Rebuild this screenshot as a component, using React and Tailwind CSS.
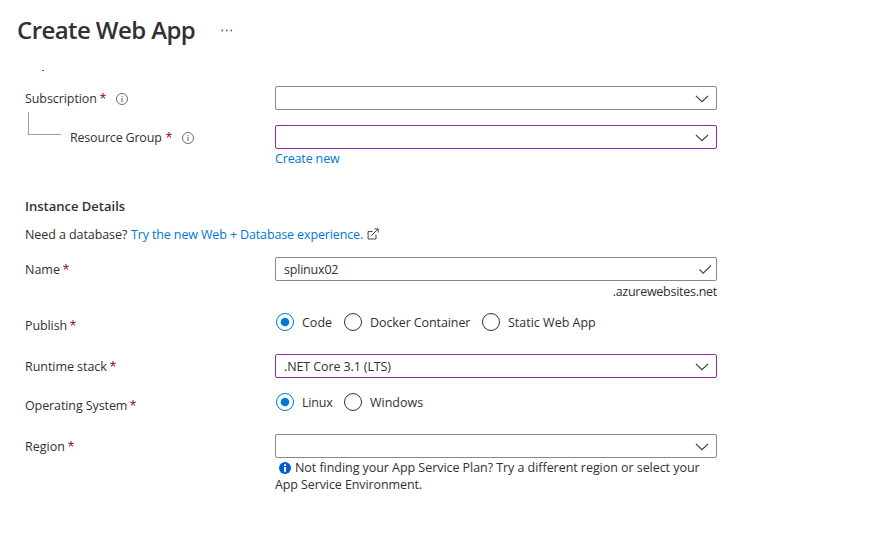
import React from "react";

function Chevron() {
  return (
    <svg className="mt-px" width="14" height="8" viewBox="0 0 14 8" fill="none" stroke="#3b3a39" strokeWidth="1.1">
      <path d="M0.9 0.8 L7 6.7 L13.1 0.8" />
    </svg>
  );
}

function Info() {
  return (
    <svg width="12" height="12" viewBox="0 0 12 12" fill="none" stroke="#605e5c">
      <circle cx="6" cy="6" r="5.5" strokeWidth="0.9" />
      <path d="M6 5V9M6 3V4.2" strokeWidth="1" />
    </svg>
  );
}

function Star() {
  return (
    <svg className="mb-[5px] ml-[3px] shrink-0" width="6" height="6" viewBox="0 0 6 6" stroke="#a4262c" strokeWidth="1.1">
      <path d="M3 0V3M0.2 2.1L3 3M5.8 2.1L3 3M1.2 5.5L3 3M4.8 5.5L3 3" />
    </svg>
  );
}

function Label({ children, className = "", info = false }) {
  return (
    <div className={`flex h-6 items-center whitespace-nowrap ${className}`}>
      <span>{children}</span>
      <Star />
      {info && <span className="ml-[10px] mt-[2px] tracking-normal"><Info /></span>}
    </div>
  );
}

function Field({ children, purple = false, icon }) {
  return (
    <div
      className={`flex h-6 w-[442px] items-center justify-between rounded-[2px] border pl-2 pr-[7px] ${
        purple ? "border-[#8a2da5]" : "border-[#8a8886]"
      }`}
    >
      <span className="whitespace-nowrap tracking-[-0.11px]">{children}</span>
      {icon || <Chevron />}
    </div>
  );
}

function Radio({ checked = false, children, className = "" }) {
  return (
    <div className={`flex h-5 items-center gap-2 whitespace-nowrap ${className}`}>
      <svg width="18" height="18" viewBox="0 0 18 18" fill="none">
        <circle cx="9" cy="9" r="8.5" stroke={checked ? "#0078d4" : "#323130"} />
        {checked && <circle cx="9" cy="9" r="4.3" fill="#0078d4" />}
      </svg>
      <span>{children}</span>
    </div>
  );
}

export default function App() {
  return (
    <main className="flex h-[534px] w-[886px] flex-col overflow-hidden bg-white font-['Open_Sans','Noto_Sans',sans-serif] text-[12.5px] leading-[17px] text-[#323130]">
      <header className="flex h-[60px] items-center pl-[17px]">
        <h1 className="w-[178px] whitespace-nowrap text-[24px] font-semibold leading-8 tracking-[-0.58px]">Create Web App</h1>
        <svg className="ml-[26px]" width="12" height="3" viewBox="0 0 12 3" fill="#605e5c">
          <circle cx="1.3" cy="1.5" r="0.9" />
          <circle cx="5.8" cy="1.5" r="0.9" />
          <circle cx="10.3" cy="1.5" r="0.9" />
        </svg>
      </header>
      <div className="flex h-[26px] items-start pl-[42px] pt-[10px]">
        <span className="h-px w-[2px] bg-[#605e5c]" />
      </div>

      <form className="flex flex-col pl-[25px]">
        <section className="grid grid-cols-[250px_442px]">
          <Label info className="tracking-[-0.08px]">Subscription</Label>
          <Field />
          <div className="mt-[15px] flex h-6">
            <span className="-mt-[13px] ml-[3px] h-[23px] w-[33px] border-b border-l border-[#a19f9d]" />
            <div className="ml-[9px] flex">
              <div className="flex h-6 items-center whitespace-nowrap">
                <span className="w-[92px] tracking-[-0.19px]">Resource Group</span>
                <span className="ml-px"><Star /></span>
                <span className="ml-[10px] mt-[2px]"><Info /></span>
              </div>
            </div>
          </div>
          <div className="mt-[15px]"><Field purple /></div>
        </section>
        <a className="ml-[250px] mt-[1px] h-[17px] tracking-[-0.15px] text-[#0078d4]">Create new</a>

        <h2 className="mt-[30px] h-[18px] text-[13px] font-semibold leading-[18px]">Instance Details</h2>
        <p className="mt-[11px] flex h-[17px] items-center whitespace-nowrap">
          <span className="w-[102px] tracking-[-0.08px]">Need a database?</span>
          <a className="ml-1 w-[233px] tracking-[-0.13px] text-[#0078d4]">Try the new Web + Database experience.</a>
          <svg className="-mt-px ml-[3px]" width="12" height="12" viewBox="0 0 12 12" fill="none" stroke="#323130" strokeWidth="0.9">
            <path d="M5.5 3.5H1.1V11H9V6.5M4.3 7.7L11 1M7.5 0.9H11.2V4.6" />
          </svg>
        </p>

        <section className="mt-[14px] grid grid-cols-[250px_442px]">
          <Label>Name</Label>
          <Field
            icon={
              <svg className="-mr-[3px]" width="13" height="9" viewBox="0 0 13 9" fill="none" stroke="#484644" strokeWidth="1.1">
                <path d="M0.5 4.5L4.2 8.2L12 0.5" />
              </svg>
            }
          ><span className="tracking-[-0.2px]">splinux02</span></Field>
        </section>
        <div className="mt-[2px] flex h-[17px] w-[692px] justify-end tracking-[-0.27px]">.azurewebsites.net</div>

        <section className="mt-[13px] grid grid-cols-[250px_442px]">
          <Label className="tracking-[-0.1px]">Publish</Label>
          <div className="-mt-[1px] flex pl-[1px]">
            <Radio checked className="w-[68px]">Code</Radio>
            <Radio className="w-[138px] tracking-[-0.1px]">Docker Container</Radio>
            <Radio>Static Web App</Radio>
          </div>
        </section>
        <section className="mt-[17px] grid grid-cols-[250px_442px]">
          <Label className="tracking-[-0.05px]">Runtime stack</Label>
          <Field purple>.NET Core 3.1 (LTS)</Field>
        </section>
        <section className="mt-[15px] grid grid-cols-[250px_442px]">
          <Label className="tracking-[-0.1px]">Operating System</Label>
          <div className="-mt-[1px] flex pl-[1px]">
            <Radio checked className="w-[68px] tracking-[-0.2px]">Linux</Radio>
            <Radio>Windows</Radio>
          </div>
        </section>
        <section className="mt-[17px] grid grid-cols-[250px_442px]">
          <Label>Region</Label>
          <Field />
        </section>
        <div className="ml-[250px] mt-[1px] whitespace-nowrap">
          <div className="flex h-[17px] items-center">
            <svg className="ml-1 mr-[4px]" width="12" height="12" viewBox="0 0 12 12">
              <circle cx="6" cy="6" r="6" fill="#015cda" />
              <path d="M5 5H7V9.8H5ZM5 2.2H7V4H5Z" fill="white" />
            </svg>
            <span className="tracking-[-0.05px]">Not finding your App Service Plan? Try a different region or select your</span>
          </div>
          <div className="h-[17px] tracking-[-0.1px]">App Service Environment.</div>
        </div>
      </form>
    </main>
  );
}
